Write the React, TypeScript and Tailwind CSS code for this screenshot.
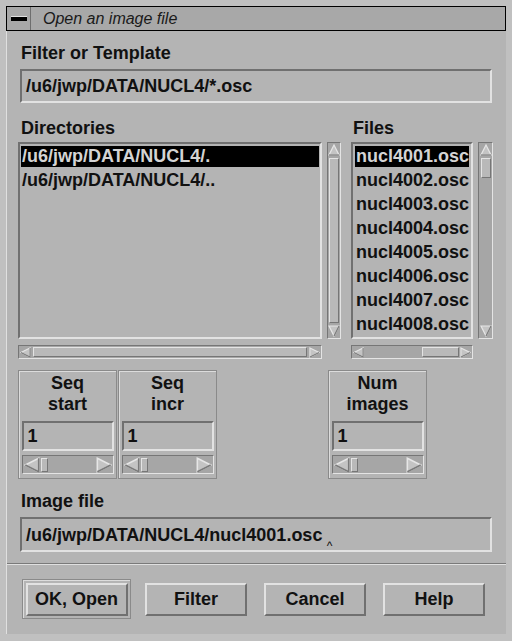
import React from "react";

// Motif-style file selection dialog

const FONT = { fontFamily: '"Liberation Sans", Arial, Helvetica, sans-serif' };

const Arrow = ({ dir, size = 12 }: { dir: "up" | "down" | "left" | "right"; size?: number }) => {
  const pts = {
    up: "6,1 11,11 1,11",
    down: "1,1 11,1 6,11",
    left: "1,6 11,1 11,11",
    right: "1,1 11,6 1,11",
  }[dir];
  return (
    <svg width={size} height={size} viewBox="0 0 12 12" className="shrink-0">
      <polygon points={pts} fill="#c4c4c4" stroke="#e6e6e6" strokeWidth="1.2" />
      <polyline
        points={
          dir === "up"
            ? "11,11 1,11"
            : dir === "down"
            ? "11,1 6,11"
            : dir === "left"
            ? "11,1 11,11 1,6"
            : "11,6 1,11"
        }
        fill="none"
        stroke="#7a7a7a"
        strokeWidth="1.2"
      />
    </svg>
  );
};

const Thumb = ({ className = "" }: { className?: string }) => (
  <div className={`border border-t-[#e4e4e4] border-l-[#e4e4e4] border-b-[#767676] border-r-[#767676] bg-[#b9b9b9] ${className}`} />
);

const VScroll = ({ h, w, thumb }: { h: number; w: number; thumb: "full" | "top" }) => (
  <div
    className="flex flex-col items-center border border-t-[#767676] border-l-[#767676] border-b-[#e4e4e4] border-r-[#e4e4e4] bg-[#a6a6a6] py-[1px]"
    style={{ height: h, width: w }}
  >
    <Arrow dir="up" />
    {thumb === "full" ? (
      <Thumb className="w-[10px] flex-1 my-[2px]" />
    ) : (
      <>
        <Thumb className="w-[10px] h-[20px] mt-[2px]" />
        <div className="flex-1" />
      </>
    )}
    <Arrow dir="down" />
  </div>
);

const HScroll = ({ w, h = 14, thumb }: { w: number; h?: number; thumb: "full" | "right" | "small" }) => (
  <div
    className="flex items-center border border-t-[#767676] border-l-[#767676] border-b-[#e4e4e4] border-r-[#e4e4e4] bg-[#a6a6a6] px-[1px]"
    style={{ width: w, height: h }}
  >
    <Arrow dir="left" size={h - 3} />
    {thumb === "full" && <Thumb className="flex-1 h-[10px] mx-[2px]" />}
    {thumb === "right" && (
      <>
        <div className="flex-1" />
        <Thumb className="w-[37px] h-[10px] mr-[1px]" />
      </>
    )}
    {thumb === "small" && (
      <>
        <Thumb className="w-[7px] h-[14px] ml-[1px]" />
        <div className="flex-1" />
      </>
    )}
    <Arrow dir="right" size={h - 3} />
  </div>
);

const Field = ({ value, w, h, caret }: { value: string; w: number; h: number; caret?: boolean }) => (
  <div
    className="flex items-center border-2 border-t-[#707070] border-l-[#707070] border-b-[#e2e2e2] border-r-[#e2e2e2] bg-[#b4b4b4] pl-[4px] text-[18px] font-bold text-[#111] leading-none"
    style={{ width: w, height: h }}
  >
    <span className="relative">
      {value}
      {caret && <span className="absolute -right-[10px] top-[14px] text-[12px] font-normal">^</span>}
    </span>
  </div>
);

const SpinBox = ({ l1, l2 }: { l1: string; l2: string }) => (
  <div className="w-[99px] h-[109px] border border-[#8a8a8a] shadow-[inset_1px_1px_0_#dcdcdc] flex flex-col items-center pt-[2px]">
    <div className="text-[18px] font-bold leading-[21px] text-center text-[#111]">
      {l1}
      <br />
      {l2}
    </div>
    <div className="mt-[6px]">
      <Field value="1" w={92} h={30} />
    </div>
    <div className="mt-[4px]">
      <HScroll w={92} h={19} thumb="small" />
    </div>
  </div>
);

const Button = ({ label, w = 102 }: { label: string; w?: number }) => (
  <div
    className="flex items-center justify-center border-2 border-t-[#e2e2e2] border-l-[#e2e2e2] border-b-[#707070] border-r-[#707070] bg-[#b4b4b4] h-[33px] text-[18px] font-bold text-[#111]"
    style={{ width: w }}
  >
    {label}
  </div>
);

export default function App() {
  const files = Array.from({ length: 8 }, (_, i) => `nucl400${i + 1}.osc`);
  const dirs = ["/u6/jwp/DATA/NUCL4/.", "/u6/jwp/DATA/NUCL4/.."];

  return (
    <div style={FONT} className="w-[512px] h-[641px] bg-[#c0c0c0] pt-[6px] pl-[6px] pr-[6px] pb-[7px] flex flex-col">
      {/* title bar */}
      <div className="h-[25px] border border-black bg-[#a8a8a8] flex items-stretch">
        <div className="w-[24px] border-r border-[#6e6e6e] flex items-center justify-center">
          <div className="w-[16px] h-[5px] bg-black border-t border-[#e0e0e0]" />
        </div>
        <div className="pl-[12px] flex items-center text-[16px] italic text-[#1a1a1a]">Open an image file</div>
      </div>

      {/* body */}
      <div className="flex-1 bg-[#b4b4b4] border-l border-[#e0e0e0] pl-[11px] flex flex-col text-[#111]">
        <div className="mt-[11px] h-[22px] pl-[3px] text-[18px] font-bold leading-[22px]">Filter or Template</div>
        <div className="mt-[5px] pl-[2px]">
          <Field value="/u6/jwp/DATA/NUCL4/*.osc" w={472} h={34} />
        </div>

        <div className="mt-[14px] flex">
          <div className="flex flex-col">
            <div className="h-[22px] pl-[3px] text-[18px] font-bold leading-[22px]">Directories</div>
            <div className="mt-[3px] flex">
              <div className="w-[304px] h-[197px] border-2 border-t-[#707070] border-l-[#707070] border-b-[#e2e2e2] border-r-[#e2e2e2] pt-[2px] px-[1px]">
                {dirs.map((d, i) => (
                  <div
                    key={d}
                    className={`h-[21px] mb-[3px] pl-[1px] text-[18px] font-bold leading-[21px] ${
                      i === 0 ? "bg-black text-[#d4d4d4]" : ""
                    }`}
                  >
                    {d}
                  </div>
                ))}
              </div>
              <div className="ml-[5px]">
                <VScroll h={197} w={14} thumb="full" />
              </div>
            </div>
            <div className="mt-[6px]">
              <HScroll w={304} thumb="full" />
            </div>
          </div>

          <div className="ml-[10px] flex flex-col">
            <div className="h-[22px] pl-[2px] text-[18px] font-bold leading-[22px]">Files</div>
            <div className="mt-[3px] flex">
              <div className="w-[122px] h-[197px] border-2 border-t-[#707070] border-l-[#707070] border-b-[#e2e2e2] border-r-[#e2e2e2] pt-[2px] pl-[2px] pr-[2px] overflow-hidden">
                {files.map((f, i) => (
                  <div
                    key={f}
                    className={`h-[21px] mb-[3px] pl-[1px] text-[18px] font-bold leading-[21px] whitespace-nowrap ${
                      i === 0 ? "bg-black text-[#d4d4d4]" : ""
                    }`}
                  >
                    {f}
                  </div>
                ))}
              </div>
              <div className="ml-[5px]">
                <VScroll h={197} w={15} thumb="top" />
              </div>
            </div>
            <div className="mt-[6px]">
              <HScroll w={122} thumb="right" />
            </div>
          </div>
        </div>

        <div className="mt-[11px] flex">
          <SpinBox l1="Seq" l2="start" />
          <div className="ml-[1px]">
            <SpinBox l1="Seq" l2="incr" />
          </div>
          <div className="ml-[111px]">
            <SpinBox l1="Num" l2="images" />
          </div>
        </div>

        <div className="mt-[11px] h-[22px] pl-[3px] text-[18px] font-bold leading-[22px]">Image file</div>
        <div className="mt-[5px] pl-[2px]">
          <Field value="/u6/jwp/DATA/NUCL4/nucl4001.osc" w={472} h={35} caret />
        </div>

        <div className="mt-[11px] -ml-[11px] h-[2px] border-t border-[#7a7a7a] border-b border-b-[#e0e0e0]" />

        <div className="mt-[14px] flex items-center pl-[4px]">
          <div className="w-[109px] h-[40px] border border-[#8a8a8a] shadow-[inset_1px_1px_0_#dcdcdc] flex items-center justify-center">
            <Button label="OK, Open" w={102} />
          </div>
          <div className="ml-[14px]">
            <Button label="Filter" />
          </div>
          <div className="ml-[17px]">
            <Button label="Cancel" />
          </div>
          <div className="ml-[17px]">
            <Button label="Help" />
          </div>
        </div>
      </div>
    </div>
  );
}
